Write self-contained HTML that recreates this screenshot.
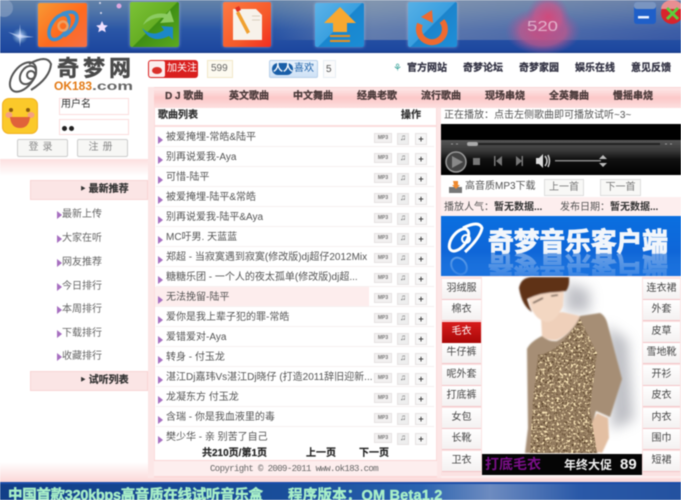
<!DOCTYPE html>
<html><head><meta charset="utf-8">
<style>
*{margin:0;padding:0;box-sizing:border-box}
html,body{width:681px;height:500px;overflow:hidden;background:#fff}
body{position:relative;font-family:"Liberation Sans","WenQuanYi Zen Hei","Noto Sans CJK SC",sans-serif;font-size:10px;color:#444}
#w{position:absolute;left:0;top:0;width:681px;height:500px;overflow:hidden;background:#fff;filter:blur(.4px)}
.a{position:absolute}
.t{position:absolute;white-space:nowrap;line-height:14px}
.b{font-weight:bold;color:#333;-webkit-text-stroke:.2px #333}
.tab{top:90px;font-weight:bold;color:#4a3a3a;font-size:10px;-webkit-text-stroke:.25px #4a3a3a}
.lnk{top:62px;font-weight:bold;color:#334;font-size:10px;-webkit-text-stroke:.25px #334}
.m{position:absolute;left:62px;font-size:10px;color:#666;white-space:nowrap;line-height:14px}
.m:before{content:"";position:absolute;left:-5px;top:3px;border-left:5px solid #a76fc0;border-top:4px solid transparent;border-bottom:4px solid transparent}
.r{position:absolute;left:156px;width:278px;height:20px;border-bottom:1px solid #f6f0f0}
.r .n{position:absolute;left:10px;top:4px;font-size:10px;color:#555;white-space:nowrap;line-height:14px}
.r:before{content:"";position:absolute;left:2px;top:9px;border-left:5px solid #a76fc0;border-top:4px solid transparent;border-bottom:4px solid transparent}
.r i{position:absolute;display:block;font-style:normal;text-align:center;background:#f3f1f1;border:1px solid #e6e2e2}
.r .p3{left:218px;top:6px;width:18px;height:10px;font:bold 5px/8px "Liberation Sans",sans-serif;color:#777}
.r .c{left:241px;top:6px;width:12px;height:12px;background:#eee;font:bold 8px/10px "Liberation Mono",monospace;color:#666}
.r .d{left:259px;top:6px;width:12px;height:12px;background:#f6f6f6;font:bold 9px/10px "Liberation Sans",sans-serif;color:#444}
.sb{position:absolute;width:39px;height:21px;background:linear-gradient(#fff,#f4f1f1);border-bottom:1px solid #f3c5c8;text-align:center;font-size:10px;line-height:20px;color:#444}
.ic{position:absolute;top:3px;width:49px;height:44px;border-radius:2px;box-shadow:0 0 3px rgba(220,230,255,.5)}
</style></head>
<body><div id="w">
<!-- top banner -->
<div class="a" style="left:0;top:0;width:681px;height:53px;background:linear-gradient(#6583a8 0,#4f74a8 12px,#2a56a6 30px,#1d479f 50px);border-bottom:2px solid #1a3f8e"></div>
<div class="a" style="left:270px;top:0;width:411px;height:40px;background:linear-gradient(90deg,rgba(170,175,185,0),rgba(170,175,185,.45) 25%,rgba(120,120,170,.25))"></div>
<svg class="a" style="left:0;top:0" width="681" height="53" viewBox="0 0 681 53">
<defs>
<radialGradient id="gl"><stop offset="0" stop-color="#fff"/><stop offset=".3" stop-color="#bcd2ff" stop-opacity=".7"/><stop offset="1" stop-color="#9cc" stop-opacity="0"/></radialGradient>
<radialGradient id="ht"><stop offset="0" stop-color="#cf4a7c"/><stop offset=".6" stop-color="#c2588c" stop-opacity=".75"/><stop offset="1" stop-color="#8c5aa0" stop-opacity="0"/></radialGradient>
</defs>
<circle cx="4" cy="8" r="9" fill="#8fa5c4" opacity=".6"/>
<circle cx="20" cy="36" r="8" fill="url(#gl)"/>
<path d="M20 24 L21 35 L34 37 L21 38 L20 47 L19 38 L8 32 L19 35Z" fill="#dbe6ff" opacity=".6"/>
<path d="M102 21 l1.800 4 4 .5 -3 2.800 1 4 -3.800-2 -3.800 2 1-4 -3-2.800 4-.5z" fill="#f0e0ff"/>
<circle cx="119" cy="6" r="2.500" fill="#e0a8e0"/><circle cx="100" cy="3" r="1" fill="#dde"/><circle cx="101" cy="13" r="1" fill="#dde"/>
<ellipse cx="543" cy="31" rx="38" ry="24" fill="url(#ht)"/>
<ellipse cx="548" cy="17" rx="22" ry="22" fill="url(#ht)"/>
<text x="527" y="31" font-family="Liberation Sans,sans-serif" font-size="15" fill="#e8c0d6" opacity=".85" textLength="31" lengthAdjust="spacingAndGlyphs">520</text>
<!-- window buttons -->
<rect x="634" y="2" width="22" height="22" rx="3" fill="#1f5fc8"/><rect x="634" y="2" width="22" height="7" rx="3" fill="#7a95c0"/><rect x="638" y="16" width="11" height="2.500" fill="#e8f0ff"/>
<circle cx="672" cy="13" r="11" fill="#d8242c"/><path d="M661 9 a11 9 0 0 1 22 0z" fill="#e88f92"/><path d="M667 8 L678 19 M678 8 L667 19" stroke="#5ccf3c" stroke-width="3"/>
</svg>
<!-- app icons -->
<div class="ic" style="left:38px;background:linear-gradient(135deg,#f79a34,#ff6a1e 55%,#f46f45)"></div>
<div class="ic" style="left:130px;top:2px;height:45px;background:linear-gradient(135deg,#7cc237 0,#66ae24 50%,#3e8e14 51%,#5caa20)"></div>
<div class="ic" style="left:223px;top:2px;height:45px;width:48px;background:linear-gradient(135deg,#fd7a42,#f55a2a 60%,#f32d20)"></div>
<div class="ic" style="left:315px;background:linear-gradient(135deg,#5db3e8,#3aa0e0 50%,#1a86cf 51%,#1b8dd5)"></div>
<div class="ic" style="left:408px;top:2px;height:45px;background:linear-gradient(135deg,#56b0e6,#3a9fe0 50%,#1c84cc 51%,#1f8fd8)"></div>
<svg class="a" style="left:0;top:0" width="681" height="53" viewBox="0 0 681 53">
<g fill="none" stroke="#3c8fd0"><ellipse cx="59" cy="27" rx="8" ry="14" stroke-width="3.500" transform="rotate(32 59 27)"/><path d="M62 14 q16-6 15 6 q-2 9-13 16" stroke-width="3.500"/><circle cx="63" cy="26" r="4.500" stroke="#f0a060" stroke-width="2.500"/></g>
<path d="M143 25 q6-14 24-11 l3-4 4 12 -14 1 4-5 q-11-2-21 7z" fill="#8ccb62"/>
<path d="M142 28 q10 10 22 2 l-3-4 12 1 0 13 -4-4 q-18 9-27-8z" fill="#1c88c8"/>
<path d="M233 9 L256 9 L262 15 L262 40 L233 40Z" fill="#f7f2ea"/><path d="M252 16h8M252 20h8" stroke="#d9cfc0" stroke-width="1"/><path d="M239 11 L250 32 L247 34 L236 13Z" fill="#f0a030"/><path d="M235 8 l4-2 2 4 -4 2z" fill="#e03020"/>
<path d="M340 7 L356 23 L347 23 L347 32 L333 32 L333 23 L324 23Z" fill="#f8a830"/><path d="M330 35h20v2h-20zM330 40h20v2h-20z" fill="#e89020"/>
<path d="M442 21 A13 13 0 1 1 420 24" fill="none" stroke="#ee6a30" stroke-width="6"/><path d="M432 10 L421 17 L433 23Z" fill="#ee6a30"/>
</svg>
<!-- logo -->
<svg class="a" style="left:6px;top:56px" width="130" height="38" viewBox="0 0 130 38">
<g fill="none" stroke="#555" stroke-width="2"><ellipse cx="17" cy="21" rx="10" ry="17" transform="rotate(38 17 21)"/><path d="M23 8 q18-10 22 0 q-1 14-20 26"/><ellipse cx="22" cy="19" rx="7" ry="10" transform="rotate(35 22 19)"/><circle cx="25" cy="19" r="4"/></g>
<text x="48" y="34" font-family="Liberation Sans,sans-serif" font-size="11.500" font-weight="bold" fill="#e37a15" textLength="38" lengthAdjust="spacingAndGlyphs">OK183</text>
<text x="86" y="34" font-family="Liberation Sans,sans-serif" font-size="12" font-weight="bold" fill="#666" textLength="41" lengthAdjust="spacingAndGlyphs">.com</text>
</svg>
<div class="t" style="left:57px;top:57px;font-size:22px;line-height:24px;font-weight:bold;color:#4a4a4a;letter-spacing:4px;-webkit-text-stroke:.5px #4a4a4a">奇梦网</div>
<!-- social -->
<div class="a" style="left:148px;top:60px;width:50px;height:18px;background:#d9201f;border-radius:3px"></div>
<div class="a" style="left:149px;top:61px;width:16px;height:16px;background:#fbeeee;border-radius:2px"></div>
<div class="a" style="left:152px;top:67px;width:10px;height:7px;background:#d9302a;border-radius:50%"></div>
<div class="t" style="left:167px;top:62px;color:#fff;font-size:10px">加关注</div>
<div class="a" style="left:207px;top:60px;width:26px;height:18px;background:#fdfaf0;border:1px solid #f2e8c8"></div>
<div class="t" style="left:211px;top:62px;color:#666;font-size:10px">599</div>
<div class="a" style="left:269px;top:60px;width:49px;height:18px;background:linear-gradient(#e8f2fc,#cfe2f6);border:1px solid #b8d0ea;border-radius:2px"></div>
<div class="a" style="left:272px;top:63px;width:21px;height:12px;background:#1a5fa8;border-radius:6px"></div>
<div class="t" style="left:273px;top:62px;color:#fff;font-size:10px;font-weight:bold">人人</div>
<div class="t" style="left:294px;top:62px;color:#1a5fa8;font-size:10px">喜欢</div>
<div class="a" style="left:323px;top:60px;width:13px;height:18px;background:#fbfbfb;border:1px solid #e8eef4"></div>
<div class="t" style="left:326px;top:63px;color:#555;font-size:10px">5</div>
<div class="t" style="left:393px;top:62px;color:#3aa39a;font-size:10px">⚘</div>
<div class="t lnk" style="left:407px">官方网站</div>
<div class="t lnk" style="left:463px">奇梦论坛</div>
<div class="t lnk" style="left:519px">奇梦家园</div>
<div class="t lnk" style="left:575px">娱乐在线</div>
<div class="t lnk" style="left:631px">意见反馈</div>
<!-- user -->
<div class="a" style="left:2px;top:98px;width:36px;height:36px;background:#fbc92a;border:1px solid #f0b020;border-radius:7px"></div>
<svg class="a" style="left:2px;top:98px" width="36" height="36"><circle cx="9" cy="12" r="2" fill="#8a5a10"/><circle cx="26" cy="12" r="2" fill="#8a5a10"/><ellipse cx="7" cy="17" rx="3.500" ry="3" fill="#f6a080"/><ellipse cx="29" cy="17" rx="3.500" ry="3" fill="#f6a080"/><path d="M8 19 H28 Q27 30 18 30 Q9 30 8 19Z" fill="#e0623a"/></svg>
<div class="a" style="left:59px;top:98px;width:70px;height:17px;border:1px solid #fbdcdc"></div>
<div class="a" style="left:59px;top:119px;width:70px;height:16px;border:1px solid #fbdcdc"></div>
<div class="t" style="left:61px;top:98px;font-size:10px;color:#333">用户名</div>
<div class="a" style="left:62px;top:126px;width:5px;height:5px;border-radius:50%;background:#222"></div>
<div class="a" style="left:69px;top:126px;width:5px;height:5px;border-radius:50%;background:#222"></div>
<div class="a" style="left:17px;top:139px;width:51px;height:18px;background:#f7f7f5;border:1px solid #ccc;border-radius:2px;text-align:center;line-height:15px;color:#888;letter-spacing:4px">登录</div>
<div class="a" style="left:77px;top:139px;width:51px;height:18px;background:#f7f7f5;border:1px solid #ccc;border-radius:2px;text-align:center;line-height:15px;color:#888;letter-spacing:4px">注册</div>
<!-- left -->
<div class="a" style="left:0;top:159px;width:148px;height:17px;background:linear-gradient(#fde0e0,#fff)"></div>
<div class="a" style="left:30px;top:180px;width:118px;height:20px;background:#fbe5e5;border:1px solid #f8d5d5"></div>
<div class="t b" style="left:80px;top:183px;font-size:10px">‣ 最新推荐</div>
<div class="m" style="top:208px">最新上传</div>
<div class="m" style="top:232px">大家在听</div>
<div class="m" style="top:256px">网友推荐</div>
<div class="m" style="top:280px">今日排行</div>
<div class="m" style="top:303px">本周排行</div>
<div class="m" style="top:327px">下载排行</div>
<div class="m" style="top:350px">收藏排行</div>
<div class="a" style="left:30px;top:371px;width:118px;height:20px;background:#fbe5e5;border:1px solid #f8d5d5"></div>
<div class="t b" style="left:80px;top:374px;font-size:10px">‣ 试听列表</div>
<div class="a" style="left:0;top:462px;width:681px;height:21px;background:linear-gradient(#fff,#fbd6d6)"></div>
<!-- tabs -->
<div class="a" style="left:148px;top:87px;width:533px;height:21px;background:linear-gradient(#fde8e8,#fcc8c8 50%,#fde0e0);border-top:1px solid #f9d5d5"></div>
<div class="a" style="left:148px;top:87px;width:6px;height:391px;background:#fce6e6"></div>
<div class="t tab" style="left:165px">D J 歌曲</div>
<div class="t tab" style="left:229px">英文歌曲</div>
<div class="t tab" style="left:293px">中文舞曲</div>
<div class="t tab" style="left:357px">经典老歌</div>
<div class="t tab" style="left:421px">流行歌曲</div>
<div class="t tab" style="left:485px">现场串烧</div>
<div class="t tab" style="left:549px">全英舞曲</div>
<div class="t tab" style="left:613px">慢摇串烧</div>
<!-- list -->
<div class="a" style="left:154px;top:108px;width:283px;height:370px;background:#fff;border:1px solid #fbdcdc;border-top:0"></div>
<div class="a" style="left:154px;top:125px;width:283px;height:2px;background:#fbdcdc"></div>
<div class="t b" style="left:158px;top:109px;font-size:10px">歌曲列表</div>
<div class="t b" style="left:401px;top:109px;font-size:10px">操作</div>
<div class="a" style="left:155px;top:287px;width:214px;height:20px;background:#fdeded"></div>
<div class="r" style="top:127px"><span class="n">被爱掩埋-常皓&amp;陆平</span><i class="p3">MP3</i><i class="c">♫</i><i class="d">+</i></div>
<div class="r" style="top:147px"><span class="n">别再说爱我-Aya</span><i class="p3">MP3</i><i class="c">♫</i><i class="d">+</i></div>
<div class="r" style="top:167px"><span class="n">可惜-陆平</span><i class="p3">MP3</i><i class="c">♫</i><i class="d">+</i></div>
<div class="r" style="top:187px"><span class="n">被爱掩埋-陆平&amp;常皓</span><i class="p3">MP3</i><i class="c">♫</i><i class="d">+</i></div>
<div class="r" style="top:207px"><span class="n">别再说爱我-陆平&amp;Aya</span><i class="p3">MP3</i><i class="c">♫</i><i class="d">+</i></div>
<div class="r" style="top:227px"><span class="n">MC吁男. 天蓝蓝</span><i class="p3">MP3</i><i class="c">♫</i><i class="d">+</i></div>
<div class="r" style="top:247px"><span class="n">郑超 - 当寂寞遇到寂寞(修改版)dj超仔2012Mix</span><i class="p3">MP3</i><i class="c">♫</i><i class="d">+</i></div>
<div class="r" style="top:267px"><span class="n">糖糖乐团 - 一个人的夜太孤单(修改版)dj超...</span><i class="p3">MP3</i><i class="c">♫</i><i class="d">+</i></div>
<div class="r" style="top:287px"><span class="n">无法挽留-陆平</span><i class="p3">MP3</i><i class="c">♫</i><i class="d">+</i></div>
<div class="r" style="top:307px"><span class="n">爱你是我上辈子犯的罪-常皓</span><i class="p3">MP3</i><i class="c">♫</i><i class="d">+</i></div>
<div class="r" style="top:327px"><span class="n">爱错爱对-Aya</span><i class="p3">MP3</i><i class="c">♫</i><i class="d">+</i></div>
<div class="r" style="top:347px"><span class="n">转身 - 付玉龙</span><i class="p3">MP3</i><i class="c">♫</i><i class="d">+</i></div>
<div class="r" style="top:367px"><span class="n">湛江Dj嘉玮Vs湛江Dj晓仔 (打造2011辞旧迎新...</span><i class="p3">MP3</i><i class="c">♫</i><i class="d">+</i></div>
<div class="r" style="top:387px"><span class="n">龙凝东方 付玉龙</span><i class="p3">MP3</i><i class="c">♫</i><i class="d">+</i></div>
<div class="r" style="top:407px"><span class="n">含瑞 - 你是我血液里的毒</span><i class="p3">MP3</i><i class="c">♫</i><i class="d">+</i></div>
<div class="r" style="top:427px;border:0"><span class="n">樊少华 - 亲 别苦了自己</span><i class="p3">MP3</i><i class="c">♫</i><i class="d">+</i></div>
<div class="t b" style="left:202px;top:447px;font-size:10px;color:#222">共210页/第1页</div>
<div class="t b" style="left:306px;top:447px;font-size:10px;color:#222">上一页</div>
<div class="t b" style="left:359px;top:447px;font-size:10px;color:#222">下一页</div>
<div class="a" style="left:154px;top:460px;width:283px;height:17px;background:#fdeeee;border-top:1px solid #fbd5d5;border-bottom:1px solid #fbd5d5"></div>
<div class="t" style="left:210px;top:463px;font:9px/12px 'Liberation Mono',monospace;color:#666;letter-spacing:-.6px;white-space:nowrap">Copyright © 2009-2011 www.ok183.com</div>
<!-- right -->
<div class="a" style="left:437px;top:108px;width:4px;height:370px;background:#fce6e6"></div>
<div class="a" style="left:441px;top:108px;width:240px;height:370px;background:#fdeeee"></div>
<div class="a" style="left:441px;top:108px;width:240px;height:16px;background:#fff"></div>
<div class="t" style="left:444px;top:109px;font-size:10px;color:#555">正在播放：点击左侧歌曲即可播放试听~3~</div>
<div class="a" style="left:441px;top:124px;width:240px;height:16px;background:#000"></div>
<div class="a" style="left:441px;top:140px;width:240px;height:35px;background:linear-gradient(#555,#3a3a3a 30%,#111 55%,#000)"></div>
<div class="a" style="left:467px;top:143px;width:193px;height:2px;background:#222"></div>
<div class="a" style="left:467px;top:142px;width:11px;height:4px;background:#aaa;border-radius:2px"></div>
<svg class="a" style="left:441px;top:140px" width="240" height="35">
<circle cx="15" cy="22" r="10" fill="#444" stroke="#999" stroke-width="1.500"/><path d="M11 16 L22 22 L11 28Z" fill="#888"/>
<rect x="32" y="18" width="7" height="7" fill="#777"/>
<path d="M55 21 L61 16 V26Z M53 16 h1.500 v10 h-1.500z" fill="#777"/><path d="M81 21 L75 16 V26Z M82 16 h-1.500 v10 h1.500z" fill="#777"/>
<path d="M95 18 h3 l4-4 v14 l-4-4 h-3z" fill="#ddd"/><path d="M104 16 q4 5 0 10 M107 15 q3 6 0 12" stroke="#ccc" fill="none" stroke-width="1.500"/>
<rect x="114" y="20" width="46" height="1.500" fill="#888"/><path d="M162 15 l4 4 h-8z M162 27 l4-4 h-8z" fill="#bbb"/>
<path d="M10 4h2M15 4h2M224 4h2M229 4h2" stroke="#999"/>
</svg>
<div class="a" style="left:441px;top:175px;width:240px;height:22px;background:#fff"></div>
<svg class="a" style="left:449px;top:181px" width="14" height="13"><rect y="6" width="13" height="6" fill="#777"/><path d="M4 0 h5 v4 h2 l-4 4 -4-4 h2z" fill="#ee8a30"/></svg>
<div class="t" style="left:465px;top:180px;font-size:10px;color:#555">高音质MP3下载</div>
<div class="a" style="left:544px;top:179px;width:40px;height:17px;border:1px solid #ddd;background:#f8f8f6;text-align:center;line-height:15px;color:#777;font-size:10px">上一首</div>
<div class="a" style="left:600px;top:179px;width:41px;height:17px;border:1px solid #ddd;background:#f8f8f6;text-align:center;line-height:15px;color:#777;font-size:10px">下一首</div>
<div class="t" style="left:444px;top:201px;font-size:10px;color:#555">播放人气：<b style="color:#333">暂无数据...</b></div>
<div class="t" style="left:560px;top:201px;font-size:10px;color:#555">发布日期：<b style="color:#333">暂无数据...</b></div>
<!-- client banner -->
<div class="a" style="left:441px;top:216px;width:240px;height:60px;background:linear-gradient(#0a6fe0,#0f66d8 60%,#2a7fe0)"></div>
<svg class="a" style="left:441px;top:216px" width="240" height="60">
<g fill="none" stroke="#fff" stroke-width="3"><ellipse cx="18" cy="24" rx="7" ry="13" transform="rotate(38 18 24)"/><path d="M22 12 q16-8 19 0 q-2 10-17 24"/><circle cx="25" cy="23" r="4" stroke-width="2"/></g>
<g fill="none" stroke="#8fbdf0" stroke-width="2" opacity=".6"><ellipse cx="18" cy="50" rx="7" ry="9" transform="rotate(-38 18 50)"/></g>
<text x="47" y="35" font-family="WenQuanYi Zen Hei,Noto Sans CJK SC,sans-serif" font-size="26" font-weight="bold" fill="#f2f6fb" stroke="#f2f6fb" stroke-width="1" textLength="180" lengthAdjust="spacingAndGlyphs">奇梦音乐客户端</text>
<g transform="translate(0,74) scale(1,-1)" opacity=".4"><text x="47" y="35" font-family="WenQuanYi Zen Hei,Noto Sans CJK SC,sans-serif" font-size="26" font-weight="bold" fill="#dde8f8" stroke="#dde8f8" stroke-width="1" textLength="180" lengthAdjust="spacingAndGlyphs">奇梦音乐客户端</text></g>
</svg>
<div class="a" style="left:441px;top:216px;width:240px;height:60px;background:linear-gradient(transparent 68%,rgba(10,100,220,.55))"></div>
<!-- side buttons -->
<div class="a" style="left:441px;top:277px;width:240px;height:199px;background:#fbe2e2"></div>
<div class="sb" style="left:442px;top:279px">羽绒服</div>
<div class="sb" style="left:442px;top:300px">棉衣</div>
<div class="sb" style="left:442px;top:322px;background:linear-gradient(#d81c1c,#a80808);color:#fff;border:0">毛衣</div>
<div class="sb" style="left:442px;top:343px">牛仔裤</div>
<div class="sb" style="left:442px;top:365px">呢外套</div>
<div class="sb" style="left:442px;top:386px">打底裤</div>
<div class="sb" style="left:442px;top:408px">女包</div>
<div class="sb" style="left:442px;top:429px">长靴</div>
<div class="sb" style="left:442px;top:451px">卫衣</div>
<div class="sb" style="left:643px;top:279px;width:37px">连衣裙</div>
<div class="sb" style="left:643px;top:300px;width:37px">外套</div>
<div class="sb" style="left:643px;top:322px;width:37px">皮草</div>
<div class="sb" style="left:643px;top:343px;width:37px">雪地靴</div>
<div class="sb" style="left:643px;top:365px;width:37px">开衫</div>
<div class="sb" style="left:643px;top:386px;width:37px">皮衣</div>
<div class="sb" style="left:643px;top:408px;width:37px">内衣</div>
<div class="sb" style="left:643px;top:429px;width:37px">围巾</div>
<div class="sb" style="left:643px;top:451px;width:37px">短裙</div>
<!-- photo -->
<svg class="a" style="left:482px;top:277px" width="160" height="199" viewBox="482 277 160 199">
<defs>
<filter id="sq" x="0" y="0" width="100%" height="100%" color-interpolation-filters="sRGB"><feTurbulence type="fractalNoise" baseFrequency=".42" numOctaves="2" seed="4"/><feColorMatrix values="0 0 0 0 .98  0 0 0 0 .9  0 0 0 0 .72  5 5 0 0 -5.300"/><feComposite in2="SourceGraphic" operator="in" result="g"/><feTurbulence type="fractalNoise" baseFrequency=".5" numOctaves="2" seed="11"/><feColorMatrix values="0 0 0 0 .36  0 0 0 0 .27  0 0 0 0 .17  5 5 0 0 -5.400"/><feComposite in2="SourceGraphic" operator="in" result="d"/><feMerge><feMergeNode in="SourceGraphic"/><feMergeNode in="d"/><feMergeNode in="g"/></feMerge></filter>
<filter id="sd"><feGaussianBlur stdDeviation="6"/></filter>
<filter id="sf"><feGaussianBlur stdDeviation=".7"/></filter>
</defs>
<rect x="482" y="277" width="160" height="199" fill="#fff"/>
<path d="M566 282 L590 290 L590 312 L565 312Z M606 325 L628 340 L634 420 L612 430Z" fill="#b4b5bc" filter="url(#sd)" opacity=".85"/>
<g filter="url(#sf)">
<path d="M542 336 Q549 342 557 341 Q572 333 580 316 L600 313 Q606 316 608 326 L622 379 L610 417 L596 411 L592 425 L598 453 L525 453 L528 428 L527 349 Q530 342 542 336Z" fill="#a68e74"/>
<path d="M590 426 L597 413 L608 418 L609 438 L602 453 L590 450Z" fill="#e3bfa2"/>
<path d="M541 318 L562 312 L580 316 Q572 333 557 340 Q548 341 542 336Z" fill="#efd0ba"/>
<path d="M527 294 L564 287 L563 306 Q556 322 547 322 Q535 320 530 305Z" fill="#f3d7c2"/>
<path d="M519 288 Q521 277 533 277 L569 277 Q570 286 566 291 L558 292 Q542 292 527 299 Q529 306 532 312 Q522 306 519 288Z" fill="#5e3219"/>
<path d="M533 303 L543 298 M551 296 L558 295" stroke="#3a2a22" stroke-width="1.300"/>
</g>
<path d="M538 355 Q560 352 580 319 L597 353 L590 409 L597 453 L530 453 L533 400Z" fill="#927a5e" filter="url(#sq)"/>
</svg>
<div class="a" style="left:482px;top:454px;width:160px;height:21px;background:#050505"></div>
<div class="t" style="left:485px;top:455px;font-size:14px;line-height:19px;color:#7a0f88;font-weight:bold">打底毛衣</div>
<div class="t" style="left:564px;top:458px;font-size:12px;color:#eee;font-weight:bold">年终大促</div>
<div class="t" style="left:620px;top:456px;font-size:15px;line-height:18px;color:#f4f4f4;font-weight:bold">89</div>
<!-- footer -->
<div class="a" style="left:0;top:482px;width:681px;height:18px;background:linear-gradient(90deg,#123f88 0,#1a4f9c 45%,#2c64b0 62%,#6d8bc0 72%,#2a59a8 85%,#2452a0);border-top:2px solid #1a4ca8"></div>
<div class="t" style="left:8px;top:487px;font-size:14.500px;line-height:18px;font-weight:bold;color:#a8efc8;letter-spacing:-.3px;-webkit-text-stroke:.4px #a8efc8">中国首款320kbps高音质在线试听音乐盒</div>
<div class="t" style="left:288px;top:487px;font-size:14.500px;line-height:18px;font-weight:bold;color:#a8efc8;letter-spacing:.2px;-webkit-text-stroke:.4px #a8efc8">程序版本：QM Beta1.2</div>
</div></body></html>
